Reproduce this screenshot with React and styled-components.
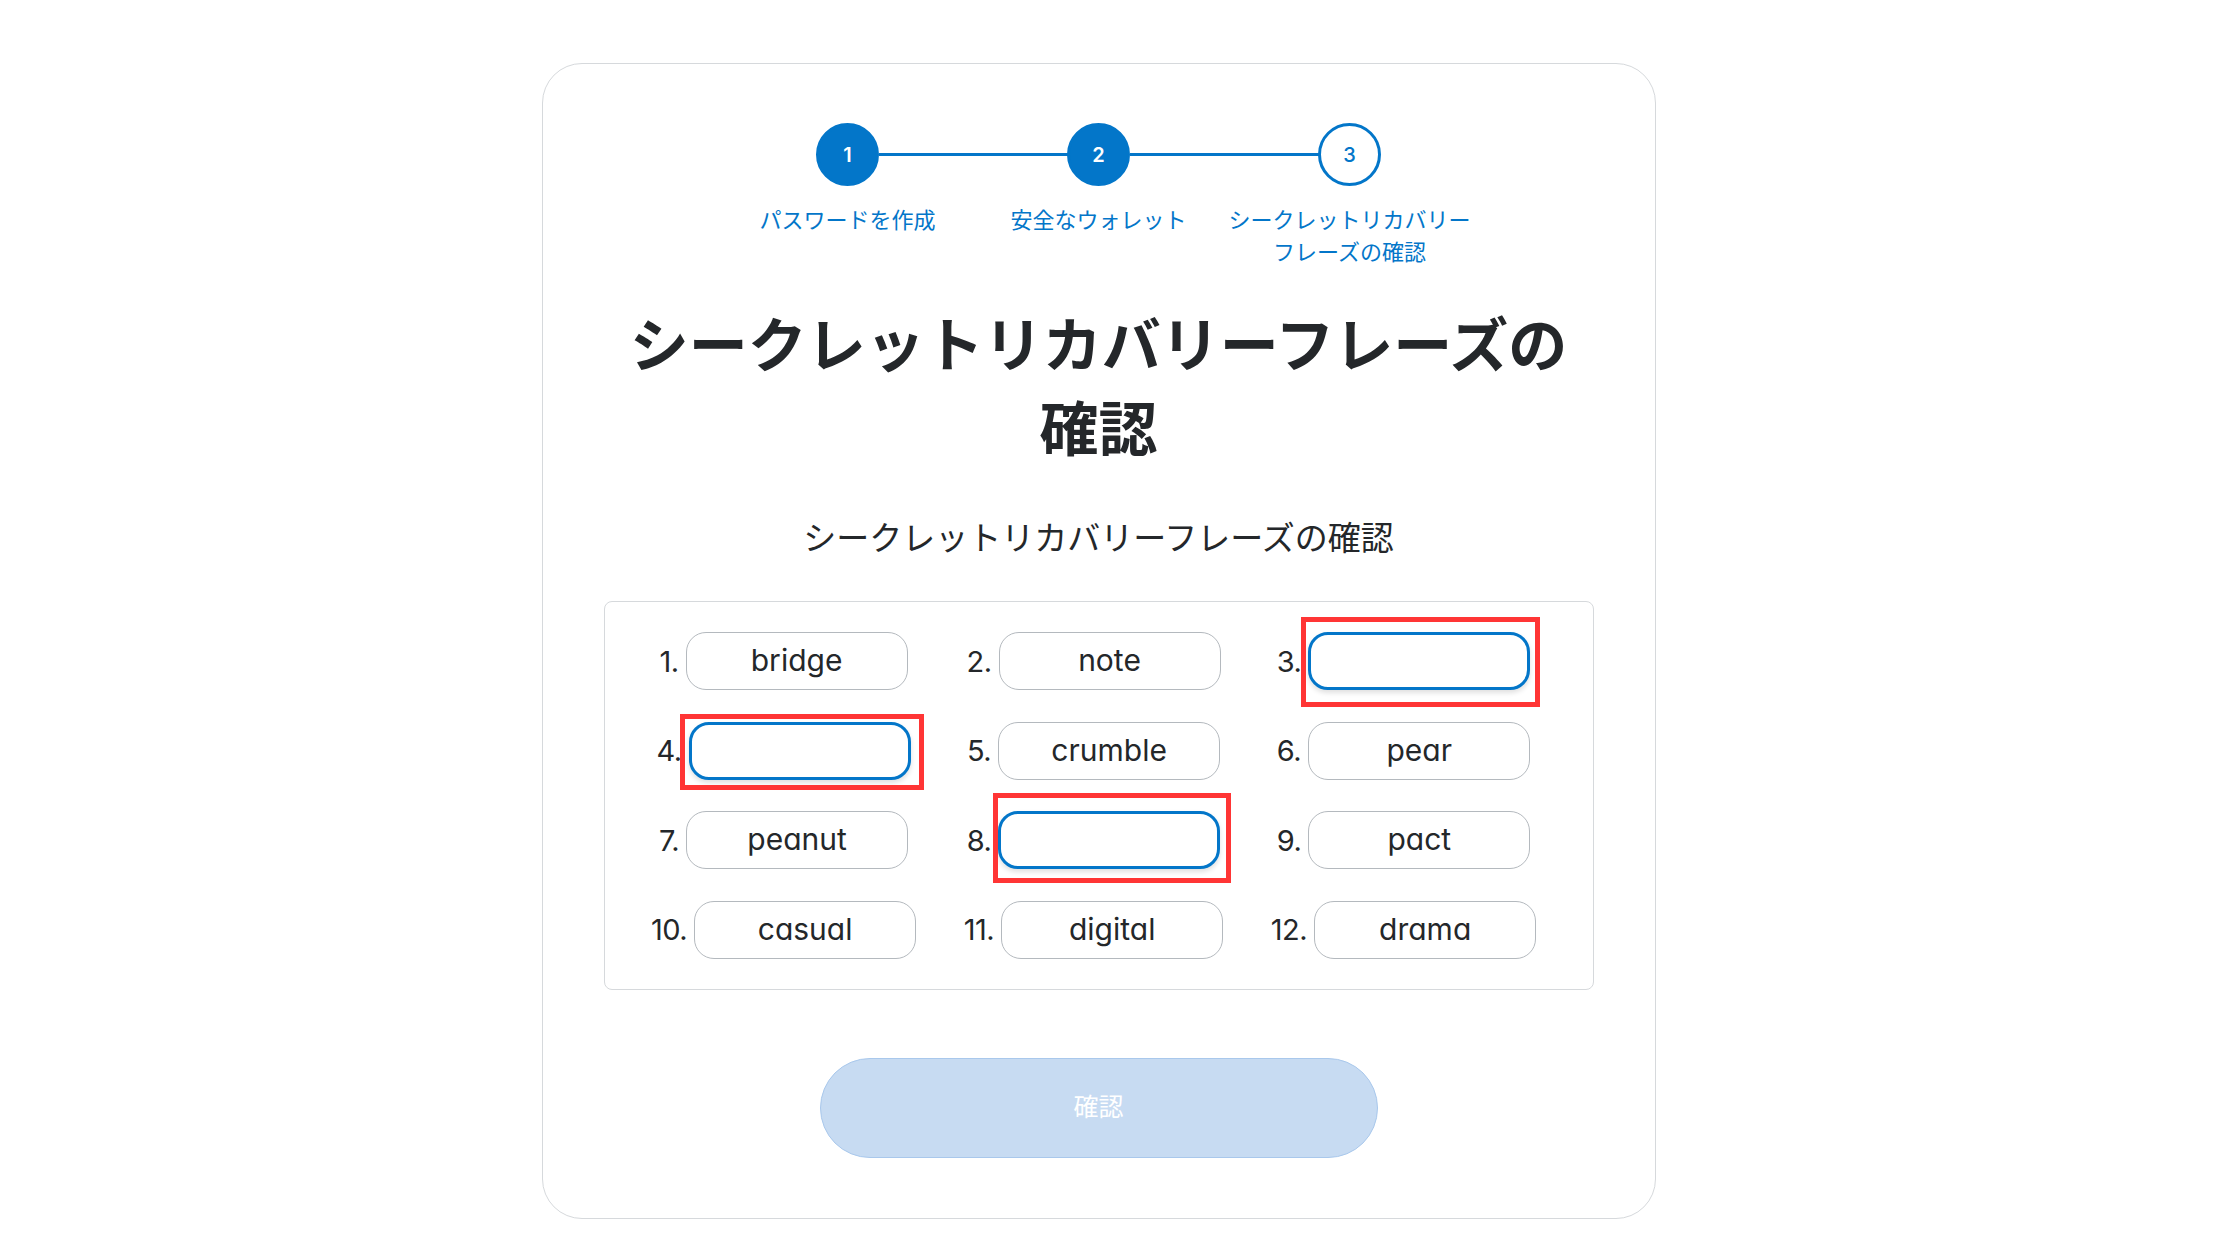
import React from "react";
import styled, { createGlobalStyle, css } from "styled-components";

const GlobalStyle = createGlobalStyle`
  html, body {
    margin: 0;
    padding: 0;
    background: #ffffff;
  }
  body {
    font-family: "Noto Sans CJK JP", "Noto Sans", sans-serif;
    color: #24272a;
  }
  * { box-sizing: border-box; }
`;

const BLUE = "#0376c9";
const JP = `"Noto Sans CJK JP", "Noto Sans", sans-serif`;
const LATIN = `Inter, "Noto Sans", "Liberation Sans", sans-serif`;

const Page = styled.div`
  display: flex;
  justify-content: center;
  padding: 63px 43px 42px 0;
  min-height: 1260px;
`;

const Card = styled.main`
  width: 1114px;
  border: 1px solid #d6d9dc;
  border-radius: 40px;
  background: #fff;
  padding: 59px 0 60px;
  display: flex;
  flex-direction: column;
  align-items: center;
`;

const Stepper = styled.ol`
  list-style: none;
  margin: 0;
  padding: 0;
  display: flex;
`;

const Step = styled.li`
  position: relative;
  width: 251px;
  display: flex;
  flex-direction: column;
  align-items: center;

  ${(p) =>
    !p.$first &&
    css`
      &::before {
        content: "";
        position: absolute;
        top: 30px;
        height: 3px;
        left: calc(-50% + 31px);
        right: calc(50% + 31px);
        background: ${BLUE};
      }
    `}
`;

const Circle = styled.div`
  width: 63px;
  height: 63px;
  border-radius: 50%;
  border: 3px solid ${BLUE};
  background: ${(p) => (p.$done ? BLUE : "#fff")};
  color: ${(p) => (p.$done ? "#fff" : BLUE)};
  display: flex;
  align-items: center;
  justify-content: center;
  font-family: ${LATIN};
  font-size: 20px;
  font-weight: ${(p) => (p.$done ? 600 : 500)};
`;

const StepLabel = styled.div`
  margin-top: 16px;
  font-family: ${JP};
  font-size: 22px;
  line-height: 32px;
  color: ${BLUE};
  text-align: center;
  padding: 0 2px;
`;

const Title = styled.h1`
  margin: 34px 0 0;
  max-width: 970px;
  font-family: ${JP};
  font-size: 59px;
  line-height: 84px;
  font-weight: 700;
  color: #24272a;
  text-align: center;
`;

const Subtitle = styled.p`
  margin: 45px 0 0;
  font-family: ${JP};
  font-size: 33px;
  line-height: 46px;
  font-weight: 400;
  color: #24272a;
  text-align: center;
`;

const WordBox = styled.div`
  margin-top: 42px;
  width: 990px;
  border: 1px solid #d6d9dc;
  border-radius: 8px;
  padding: 30px 34px 30px 24px;
  display: grid;
  grid-template-columns: repeat(3, 1fr);
  row-gap: 31.5px;
`;

const Cell = styled.div`
  display: flex;
  align-items: center;
  justify-content: center;
`;

const Index = styled.span`
  font-family: ${LATIN};
  font-feature-settings: "cv11" 1;
  font-size: 29px;
  color: #24272a;
  margin-right: 7px;
  letter-spacing: -0.5px;
`;

const PillWrap = styled.div`
  position: relative;
`;

const Pill = styled.div`
  width: 222px;
  height: 58px;
  border-radius: 20px;
  border: ${(p) => (p.$focused ? `3px solid ${BLUE}` : "1px solid #b4b9be")};
  box-shadow: ${(p) => (p.$focused ? "0 3px 5px rgba(0,0,0,0.12)" : "none")};
  background: #fff;
  display: flex;
  align-items: center;
  justify-content: center;
  font-family: ${LATIN};
  font-feature-settings: "cv11" 1;
  font-size: 30px;
  color: #24272a;
  padding-bottom: 2px;
`;

const Marker = styled.span`
  position: absolute;
  border: 5px solid #ff3535;
  pointer-events: none;
`;

const ConfirmButton = styled.button`
  margin-top: 68px;
  width: 558px;
  height: 100px;
  border-radius: 50px;
  border: 1px solid #a9c8ec;
  background: #c7dbf2;
  color: #ffffff;
  font-family: ${JP};
  font-size: 25px;
  font-weight: 400;
  padding: 0 0 5px;
  cursor: not-allowed;
`;

const steps = [
  { n: 1, label: "パスワードを作成", done: true },
  { n: 2, label: "安全なウォレット", done: true },
  { n: 3, label: "シークレットリカバリーフレーズの確認", done: false },
];

const words = [
  { n: 1, w: "bridge" },
  { n: 2, w: "note" },
  { n: 3, w: "", marker: { left: -7, right: -10, top: -15, bottom: -17 } },
  { n: 4, w: "", marker: { left: -9, right: -13, top: -8, bottom: -10 } },
  { n: 5, w: "crumble" },
  { n: 6, w: "pear" },
  { n: 7, w: "peanut" },
  { n: 8, w: "", marker: { left: -5, right: -11, top: -18, bottom: -14 } },
  { n: 9, w: "pact" },
  { n: 10, w: "casual" },
  { n: 11, w: "digital" },
  { n: 12, w: "drama" },
];

export default function App() {
  return (
    <>
      <GlobalStyle />
      <Page>
        <Card>
          <Stepper>
            {steps.map((s, i) => (
              <Step key={s.n} $first={i === 0}>
                <Circle $done={s.done}>{s.n}</Circle>
                <StepLabel>{s.label}</StepLabel>
              </Step>
            ))}
          </Stepper>
          <Title>シークレットリカバリーフレーズの確認</Title>
          <Subtitle>シークレットリカバリーフレーズの確認</Subtitle>
          <WordBox>
            {words.map((item) => (
              <Cell key={item.n}>
                <Index>{item.n}.</Index>
                <PillWrap>
                  <Pill $focused={!!item.marker}>{item.w}</Pill>
                  {item.marker && (
                    <Marker
                      style={{
                        left: item.marker.left,
                        right: item.marker.right,
                        top: item.marker.top,
                        bottom: item.marker.bottom,
                      }}
                    />
                  )}
                </PillWrap>
              </Cell>
            ))}
          </WordBox>
          <ConfirmButton disabled>確認</ConfirmButton>
        </Card>
      </Page>
    </>
  );
}
